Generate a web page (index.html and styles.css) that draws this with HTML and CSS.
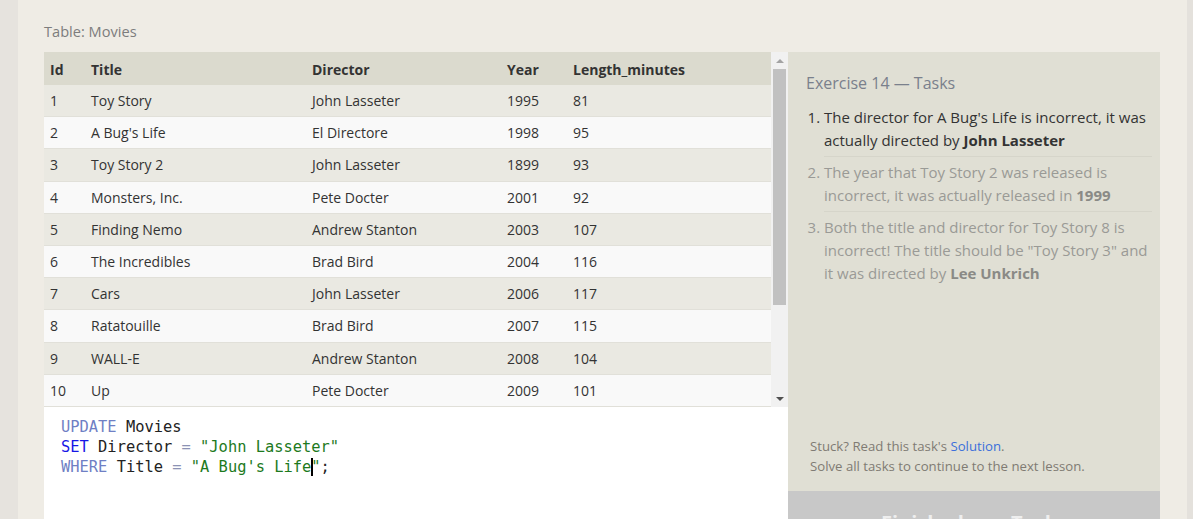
FILE: index.html
```html
<!DOCTYPE html>
<html lang="en">
<head>
<meta charset="utf-8">
<title>SQL Lesson — Exercise 14</title>
<link rel="stylesheet" href="styles.css">
</head>
<body>
<div class="page">
  <div class="side-left"></div>
  <main class="main">
    <div class="caption">Table: Movies</div>
    <div class="workspace">
      <div class="left-col">
        <div class="table-wrap">
          <div class="table">
            <div class="row head"><div>Id</div><div>Title</div><div>Director</div><div>Year</div><div>Length_minutes</div></div>
            <div class="row odd"><div>1</div><div>Toy Story</div><div>John Lasseter</div><div>1995</div><div>81</div></div>
            <div class="row even"><div>2</div><div>A Bug's Life</div><div>El Directore</div><div>1998</div><div>95</div></div>
            <div class="row odd"><div>3</div><div>Toy Story 2</div><div>John Lasseter</div><div>1899</div><div>93</div></div>
            <div class="row even"><div>4</div><div>Monsters, Inc.</div><div>Pete Docter</div><div>2001</div><div>92</div></div>
            <div class="row odd"><div>5</div><div>Finding Nemo</div><div>Andrew Stanton</div><div>2003</div><div>107</div></div>
            <div class="row even"><div>6</div><div>The Incredibles</div><div>Brad Bird</div><div>2004</div><div>116</div></div>
            <div class="row odd"><div>7</div><div>Cars</div><div>John Lasseter</div><div>2006</div><div>117</div></div>
            <div class="row even"><div>8</div><div>Ratatouille</div><div>Brad Bird</div><div>2007</div><div>115</div></div>
            <div class="row odd"><div>9</div><div>WALL-E</div><div>Andrew Stanton</div><div>2008</div><div>104</div></div>
            <div class="row even"><div>10</div><div>Up</div><div>Pete Docter</div><div>2009</div><div>101</div></div>
          </div>
          <div class="scrollbar">
            <div class="sb-btn"><span class="arrow-up"></span></div>
            <div class="sb-thumb"></div>
            <div class="sb-space"></div>
            <div class="sb-btn"><span class="arrow-down"></span></div>
          </div>
        </div>
        <div class="editor"><pre class="code"><span class="kw">UPDATE</span> <span class="id">Movies</span>
<span class="kw2">SET</span> <span class="id">Director</span> <span class="op">=</span> <span class="str">"John Lasseter"</span>
<span class="kw">WHERE</span> <span class="id">Title</span> <span class="op">=</span> <span class="str">"A Bug's Life<span class="caret"></span>"</span><span class="id">;</span></pre></div>
      </div>
      <aside class="tasks">
        <h2 class="tasks-title">Exercise 14 — Tasks</h2>
        <ol class="task-list">
          <li class="task active">The director for A Bug's Life is incorrect, it was actually directed by <strong>John Lasseter</strong></li>
          <li class="task">The year that Toy Story 2 was released is incorrect, it was actually released in <strong>1999</strong></li>
          <li class="task last">Both the title and director for Toy Story 8 is incorrect! The title should be "Toy Story 3" and it was directed by <strong>Lee Unkrich</strong></li>
        </ol>
        <div class="tasks-foot">
          <div>Stuck? Read this task's <a class="link" href="#">Solution</a>.</div>
          <div>Solve all tasks to continue to the next lesson.</div>
        </div>
        <div class="finish">Finish above Tasks</div>
      </aside>
    </div>
  </main>
  <div class="side-right"></div>
</div>
</body>
</html>
```

FILE: styles.css
```css
html, body {
  margin: 0;
  padding: 0;
  height: 519px;
  overflow: hidden;
}
body {
  font-family: "Open Sans", "Noto Sans", sans-serif;
  color: #333;
  background: #efece5;
}
.page {
  display: flex;
  height: 519px;
  overflow: hidden;
}
.side-left {
  width: 18px;
  flex: none;
  background: #e6e3de;
}
.side-right {
  width: 6px;
  flex: none;
  background: #e4e1dc;
}
.main {
  flex: 1;
  background: #efece5;
  padding: 21px 27px 0 26px;
  min-width: 0;
}
.caption {
  font-size: 14.6px;
  line-height: 20px;
  color: #7d7d7d;
  margin-bottom: 11px;
}
.workspace {
  display: grid;
  grid-template-columns: 744px 372px;
  height: 503px;
}
.left-col {
  display: flex;
  flex-direction: column;
}
.table-wrap {
  display: flex;
  height: 355px;
  flex: none;
}
.table {
  flex: 1;
  font-size: 14px;
}
.row {
  display: grid;
  grid-template-columns: 41px 221px 195px 66px 1fr;
  align-items: center;
  height: 32.2px;
  box-sizing: border-box;
  border-bottom: 1px solid #e1e0d9;
}
.row > div {
  padding-left: 6px;
  white-space: nowrap;
}
.row.head {
  height: 33px;
  background: #dbdace;
  font-weight: 700;
  border-bottom: none;
  padding-top: 1px;
}
.row.odd { background: #eae9e2; }
.row.even { background: #f9f9f9; }
.scrollbar {
  width: 17px;
  flex: none;
  background: #f1f1f1;
  display: flex;
  flex-direction: column;
}
.sb-btn {
  height: 17px;
  display: flex;
  align-items: center;
  justify-content: center;
  flex: none;
}
.arrow-up {
  width: 0;
  height: 0;
  border-left: 4px solid transparent;
  border-right: 4px solid transparent;
  border-bottom: 4px solid #a3a3a3;
}
.arrow-down {
  width: 0;
  height: 0;
  border-left: 4px solid transparent;
  border-right: 4px solid transparent;
  border-top: 4px solid #505050;
}
.sb-thumb {
  height: 236px;
  margin: 0 2px;
  background: #c1c1c1;
  flex: none;
}
.sb-space { flex: 1; }
.editor {
  flex: 1;
  background: #fff;
  padding: 10px 0 0 17px;
}
.code {
  margin: 0;
  font-family: "DejaVu Sans Mono", "Liberation Mono", monospace;
  font-size: 15.4px;
  line-height: 20px;
  color: #222;
}
.kw { color: #6f7fc4; }
.kw2 { color: #1717e6; }
.id { color: #222; }
.op { color: #8c93b5; }
.str { color: #1d7a1d; }
.caret {
  display: inline-block;
  width: 0;
  height: 18px;
  border-left: 2px solid #000;
  margin-right: -2px;
  vertical-align: -4px;
}
.tasks {
  background: #e0dfd4;
  display: flex;
  flex-direction: column;
  padding: 20px 8px 0 18px;
  min-height: 0;
}
.tasks-title {
  margin: 0;
  font-size: 16px;
  line-height: 22px;
  font-weight: 400;
  color: #7a808c;
}
.task-list {
  margin: 8px 0 0 0;
  padding-left: 18px;
  font-size: 15px;
  line-height: 23px;
  color: #9a9a96;
}
.task {
  padding: 4px 0;
  border-bottom: 1px solid #d6d5ca;
}
.task.last { border-bottom: none; }
.task strong { color: #8a8a86; }
.task.active { color: #333; }
.task.active strong { color: #333; }
.tasks-foot {
  margin-top: auto;
  font-size: 13.2px;
  line-height: 20px;
  color: #7f7b73;
  padding-left: 4px;
  margin-bottom: 15px;
}
.link {
  color: #3b6fdb;
  text-decoration: none;
}
.finish {
  margin: 0 -8px 0 -18px;
  background: #c8c8c8;
  color: #eeeeee;
  font-size: 20px;
  font-weight: 700;
  text-align: center;
  padding: 18px 0;
  line-height: 28px;
  height: 64px;
  box-sizing: border-box;
  flex: none;
}
```
